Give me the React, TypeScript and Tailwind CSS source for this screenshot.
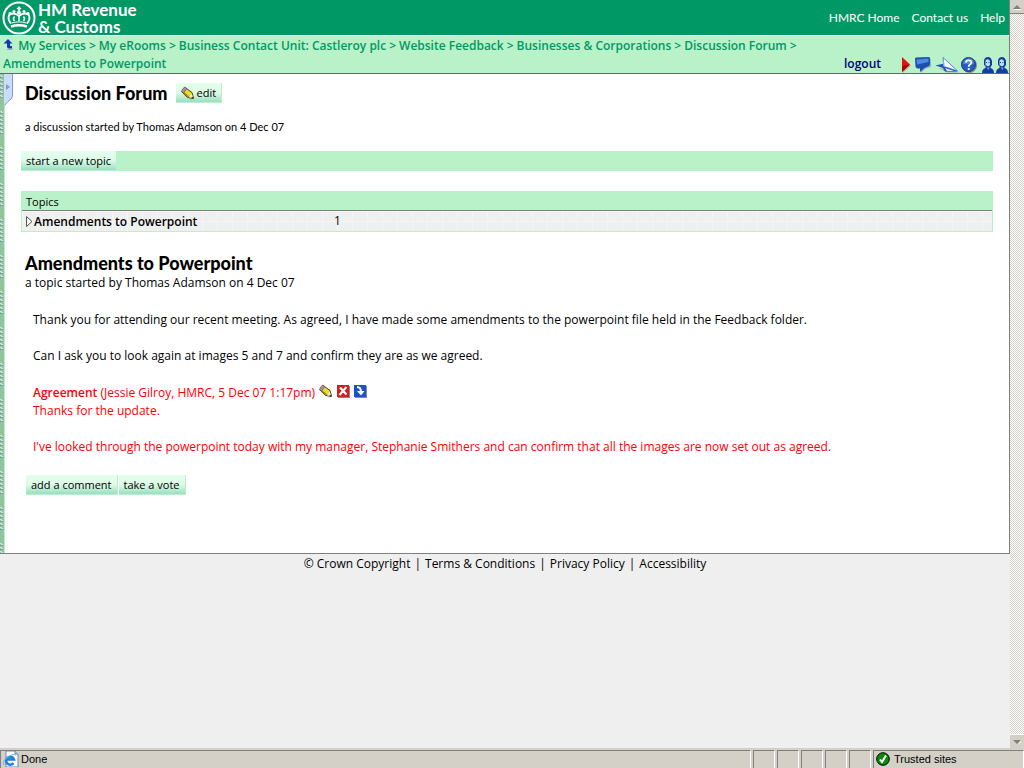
import type { ReactNode } from "react";

const trail = [
  "My Services",
  "My eRooms",
  "Business Contact Unit: Castleroy plc",
  "Website Feedback",
  "Businesses & Corporations",
  "Discussion Forum",
];

const topLinks = ["HMRC Home", "Contact us", "Help"];
const footerLinks = ["Terms & Conditions", "Privacy Policy", "Accessibility"];
const topics = [{ title: "Amendments to Powerpoint", count: 1 }];

function CrownLogo() {
  return (
    <svg className="h-[34px] w-[34px] shrink-0" viewBox="0 0 34 34" fill="none" stroke="#fff">
      <circle cx="17" cy="17" r="15.5" strokeWidth="2" />
      <path d="M17 5.500v5M14.800 7.500h4.400" strokeWidth="1.600" />
      <path d="M9 22.500C5 18 6 12.500 10.500 12.500c3 0 5 1 6.500 2.500 1.500-1.500 3.500-2.500 6.500-2.500 4.500 0 5.500 5.500 1.500 10" strokeWidth="1.800" />
      <path d="M17 14.500V20M12.500 15.500c-1.300 1.500-1.500 3 0 4.500M21.500 15.500c1.300 1.500 1.500 3 0 4.500" strokeWidth="1.500" />
      <path d="M9 25.500c5-1.500 11-1.500 16 0" strokeWidth="2.600" />
      <path d="M9.500 22c5-1.500 10-1.500 15 0" strokeWidth="1" />
      <g fill="#fff" stroke="none">
        <circle cx="17" cy="11.500" r="2" />
        <circle cx="12" cy="10.500" r="1.500" />
        <circle cx="22" cy="10.500" r="1.500" />
        <circle cx="8" cy="12.500" r="1.400" />
        <circle cx="26" cy="12.500" r="1.400" />
      </g>
    </svg>
  );
}

function UpIcon() {
  return (
    <svg className="inline-block h-3 w-3 align-[-1px]" viewBox="0 0 12 12">
      <path d="M4 10.500h5l1-1" stroke="#9aa8c8" fill="none" />
      <path d="M5 0 9.500 4.500H7V7h2v2.500H6Q4 9.500 4 7.500v-3H.5z" fill="#1238b8" />
    </svg>
  );
}

function PencilIcon() {
  return (
    <svg className="h-3.5 w-3.5" viewBox="0 0 14 14">
      <path d="M4 3 11 6.500 13.500 12.500 9.500 13.500 2 8z" fill="#777" opacity=".45" />
      <path d="M4 1.500 11 6.500 12.500 12 6.500 11.500 1 6z" fill="#e8dc30" stroke="#4a4510" />
      <path d="M2.500 6.500 7.500 11" stroke="#908a10" strokeWidth="1.500" />
      <path d="M1 4 3.500 1 6 2.500 2.500 7 .5 6z" fill="#b48a9c" stroke="#5b4650" strokeWidth=".6" />
      <path d="M10.500 7.500 12.500 12 8 11.500z" fill="#f3ecc8" />
      <path d="M11 10.500 13 12.500h-2.500z" fill="#111" />
    </svg>
  );
}

function DeleteIcon() {
  return (
    <svg className="h-[13px] w-[13px]" viewBox="0 0 13 13">
      <path d="M1 1h12v12H1z" fill="#888" />
      <path d="M0 0h12v12H0z" fill="#d41c1c" />
      <path d="m3 2.500 6.500 7M9.500 2 2.500 10" stroke="#fff" strokeWidth="2.200" />
    </svg>
  );
}

function MoveDownIcon() {
  return (
    <svg className="h-[13px] w-[13px]" viewBox="0 0 13 13">
      <path d="M1 1h12v12H1z" fill="#888" />
      <path d="M0 0h12v12H0z" fill="#1a54c4" />
      <path d="M3 2q4 0 4 5" stroke="#fff" strokeWidth="2" fill="none" />
      <path d="M3 6h7.500L7 10.500z" fill="#fff" />
    </svg>
  );
}

function FlagIcon() {
  return (
    <svg className="h-4 w-3" viewBox="0 0 12 16">
      <path d="M2 2v14l8-7.500z" fill="#888" opacity=".5" />
      <path d="M1 0v15l8-7.500z" fill="#e81010" />
      <path d="M1 9v6l8-7.500z" fill="#a80808" />
    </svg>
  );
}

function ChatIcon() {
  return (
    <svg className="h-4 w-4" viewBox="0 0 16 16">
      <path d="M3 3 16 2v8l-6 2-4 4V12z" fill="#8d9eb0" opacity=".7" />
      <path d="M1 .5 14 0q1 0 1 1.500V7q0 2-2 2.500L9.500 11 5 15v-3.500H3Q1 11.500.5 9.500L0 2Q0 .5 1 .5" fill="#1d4fb0" />
      <path d="M1.500 2.500 13.500 1.500V5L2 7.500z" fill="#4d8be0" />
    </svg>
  );
}

function PlaneIcon() {
  return (
    <svg className="h-4 w-6" viewBox="0 0 24 16">
      <path d="m4 11 8 4.500h12L12 12z" fill="#888" opacity=".6" />
      <path d="M.5 8.500 9 6.500l13.500 8H10L8 11z" fill="#1d55bd" />
      <path d="M8 .5 22.500 14 9 9.500z" fill="#fff" stroke="#2c66d0" strokeWidth=".8" />
      <path d="M8.500 3.500v6h2z" fill="#b4d0f6" />
      <path d="m10 11 9 3h-7z" fill="#e3eefc" />
    </svg>
  );
}

function HelpIcon() {
  return (
    <svg className="h-4 w-4" viewBox="0 0 16 16">
      <circle cx="8.500" cy="8.500" r="7.500" fill="#888" />
      <circle cx="7.500" cy="7.500" r="7" fill="#245cc0" stroke="#153b8c" />
      <path d="M2 7q0-5 5.500-5.500T13 7z" fill="#5286d8" />
      <path d="M5 5.500Q5 3.300 7.700 3.300T10.300 5.500Q10.300 7 8.500 8 7.700 8.500 7.700 9.700M7.700 11v2" stroke="#fff" strokeWidth="1.800" fill="none" />
    </svg>
  );
}

function PersonIcon() {
  return (
    <svg className="h-4 w-3.5" viewBox="0 0 14 16">
      <path d="M1 16q0-4 3.500-5V9L3 8V3Q4 0 7 0t4 4v4l-1.500 2v1q3.500 1 3.500 5z" fill="#123f9e" />
      <path d="M4.500 3.500Q7 1 9 4v4L7 9.500 4.500 8z" fill="#bfe0ff" />
      <path d="M5 5.500h1M7.500 5.500h1" stroke="#123f9e" />
      <path d="M5.500 10.500h3L7.500 13z" fill="#6aa6f0" />
    </svg>
  );
}

function Binding() {
  return (
    <div className="w-[5px] shrink-0 border-r border-[#b9f1c8] bg-[#90c49c]">
      <svg className="h-full w-full">
        <defs>
          <pattern id="binding" width="4" height="36" patternUnits="userSpaceOnUse">
            {[1, 5, 9, 13, 17, 21].map((y) => (
              <g key={y}>
                <path d={`M0 ${y}h2v1h1v1H1V${y + 1}H0z`} fill="#d3dfe0" />
                <path d={`M0 ${y + 2}h3v1H0z`} fill="#7f9aa0" />
              </g>
            ))}
          </pattern>
        </defs>
        <rect width="4" height="100%" fill="url(#binding)" />
      </svg>
    </div>
  );
}

function ActionButton({ children }: { children: ReactNode }) {
  return (
    <button className="flex h-5 items-center gap-0.5 border-r border-b border-[#b9f1c8] bg-linear-to-b from-[#e6ffee] via-[#dcfbe7] to-[#98dfc0] px-[5px] text-[11px] text-black">
      {children}
    </button>
  );
}

function Scrollbar() {
  return (
    <div className="flex w-3.5 shrink-0 flex-col justify-between bg-[conic-gradient(#fff_25%,#d4d0c8_0_50%,#fff_0_75%,#d4d0c8_0)] bg-[length:2px_2px]">
      <button aria-label="Scroll up" className="flex h-3.5 items-center justify-center border-b border-[#808080] bg-[#d4d0c8]">
        <svg className="h-1.5 w-2" viewBox="0 0 8 6">
          <path d="M1 6h7V5H1z" fill="#fff" />
          <path d="M0 5 4 1l4 4z" fill="#808080" />
        </svg>
      </button>
      <button aria-label="Scroll down" className="flex h-3.5 items-center justify-center border-t border-white bg-[#d4d0c8]">
        <svg className="h-1.5 w-2" viewBox="0 0 8 6">
          <path d="M5 6 8 3V1z" fill="#fff" />
          <path d="m0 1 4 4 4-4z" fill="#808080" />
        </svg>
      </button>
    </div>
  );
}

function StatusBar() {
  const cell = "border-t border-l border-r border-t-[#808080] border-l-[#808080] border-r-white";
  return (
    <div className="flex h-5 shrink-0 gap-0.5 bg-[#d4d0c8] pt-0.5 font-['Liberation_Sans',sans-serif] text-[11px] leading-4">
      <div className={`${cell} flex flex-1 gap-0.5 pl-0.5`}>
        <svg className="h-4 w-4" viewBox="0 0 16 16">
          <path d="M3 0h9l3 3v13H3z" fill="#fff" stroke="#6f86b8" />
          <path d="M12 0v3h3" fill="#c8d8f4" stroke="#6f86b8" />
          <path d="M10.500 12A4 4 0 1 1 11 8.500H4" fill="none" stroke="#2381d8" strokeWidth="2.500" />
          <path d="M1 14Q-1 10 5 6t8-2" fill="none" stroke="#68b8f0" />
        </svg>
        <span>Done</span>
      </div>
      {[0, 1, 2, 3, 4].map((n) => (
        <div key={n} className={`${cell} w-[22px]`} />
      ))}
      <div className={`${cell} flex w-[151px] gap-1 pl-0.5`}>
        <svg className="mt-px h-3.5 w-3.5" viewBox="0 0 14 14">
          <circle cx="7" cy="7" r="6.300" fill="#0a8a0a" stroke="#000" />
          <path d="m4 7.500 2 2.500 4-6.500" fill="none" stroke="#fff" strokeWidth="2" />
        </svg>
        <span>Trusted sites</span>
      </div>
    </div>
  );
}

export default function App() {
  return (
    <div className="flex h-screen flex-col bg-[#efefef] font-['Open_Sans',sans-serif] text-[12px] leading-[18px] text-black">
      <div className="flex min-h-0 flex-1">
        <div className="min-w-0 flex-1 overflow-hidden">
          <div className="border-r border-[#808080]">
            <header className="flex h-9 items-center justify-between border-b border-white bg-[#009966] pr-1 pl-0.5 font-[Lato,sans-serif] text-white">
              <div className="flex items-center gap-0.5">
                <CrownLogo />
                <div className="text-[17px] leading-[17px] font-bold">
                  <div>HM Revenue</div>
                  <div>&amp; Customs</div>
                </div>
              </div>
              <nav className="flex gap-3">
                {topLinks.map((label) => (
                  <a key={label} href="#">{label}</a>
                ))}
              </nav>
            </header>

            <div className="flex items-end justify-between border-b border-[#009966] bg-[#b9f1c8] pt-px pl-[3px] font-semibold">
              <nav className="text-[#009966]">
                <UpIcon />{" "}
                {trail.map((label) => (
                  <span key={label}>
                    <a href="#">{label}</a>
                    <span className="mx-[3px]">&gt;</span>
                  </span>
                ))}
                <br />
                <a href="#">Amendments to Powerpoint</a>
              </nav>
              <div className="flex shrink-0 items-end">
                <a href="#" className="mr-5 text-[#000080]">logout</a>
                <button aria-label="Flag"><FlagIcon /></button>
                <button aria-label="Chat" className="ml-0.5"><ChatIcon /></button>
                <button aria-label="Send" className="ml-1"><PlaneIcon /></button>
                <button aria-label="Help" className="ml-0.5"><HelpIcon /></button>
                <button aria-label="Members" className="ml-1 flex"><PersonIcon /><PersonIcon /></button>
              </div>
            </div>

            <div className="relative flex border-b border-[#808080] bg-white">
              <Binding />
              <button aria-label="Open sidebar" className="absolute top-0 left-1">
                <svg className="h-8 w-[9px]" viewBox="0 0 9 32">
                  <path d="M0 0h8.500v22Q8 25 4 27.500L.5 31.500z" fill="#ccdcff" />
                  <path d="M8.500 0v22Q8 25 4 27.500L.5 31.500" fill="none" stroke="#7c9ad8" />
                  <path d="M2 10v6l4-3z" fill="#7c9ad8" />
                </svg>
              </button>

              <main className="min-w-0 flex-1 px-4 pt-[9px] pb-[58px]">
                <div className="flex items-center gap-2 pl-1">
                  <h1 className="font-[Lato,sans-serif] text-[18px] leading-5 font-black">Discussion Forum</h1>
                  <ActionButton>
                    <PencilIcon />
                    edit
                  </ActionButton>
                </div>
                <p className="mt-[15px] pl-1 font-[Lato,sans-serif] text-[11px] leading-[18px]">
                  a discussion started by Thomas Adamson on 4 Dec 07
                </p>

                <div className="mt-[15px] flex bg-[#b9f1c8]">
                  <ActionButton>start a new topic</ActionButton>
                </div>

                <table className="mt-5 w-full border-separate border-spacing-0 border-x border-b border-[#b9f1c8] text-left">
                  <thead>
                    <tr className="bg-[#b9f1c8]">
                      <th colSpan={2} className="h-5 border-b border-[#808080] pt-0.5 pl-1 text-[11px] leading-4 font-normal">Topics</th>
                    </tr>
                  </thead>
                  <tbody>
                    {topics.map((topic) => (
                      <tr key={topic.title} className="bg-[#efefef] bg-[linear-gradient(to_right,#f5f5f5_1px,transparent_1px),linear-gradient(to_bottom,#f5f5f5_1px,transparent_1px)] bg-[length:15px_10px]">
                        <td className="h-5 w-[312px] pt-px pl-1">
                          <a href="#" className="flex items-center gap-px font-semibold">
                            <svg className="h-[11px] w-[7px]" viewBox="0 0 7 11">
                              <path d="M.5.5v10l5.500-5z" fill="#fff" stroke="#555" />
                            </svg>
                            {topic.title}
                          </a>
                        </td>
                        <td>{topic.count}</td>
                      </tr>
                    ))}
                  </tbody>
                </table>

                <article className="mt-[21px] pl-1">
                  <h2 className="font-[Lato,sans-serif] text-[18px] leading-5 font-black">Amendments to Powerpoint</h2>
                  <p className="mt-px">a topic started by Thomas Adamson on 4 Dec 07</p>
                  <div className="mt-[19px] space-y-[18px] pl-2">
                    <p>
                      Thank you for attending our recent meeting. As agreed, I have made some amendments to the powerpoint file held in the
                      Feedback folder.
                    </p>
                    <p>Can I ask you to look again at images 5 and 7 and confirm they are as we agreed.</p>
                    <section className="pt-px text-[#ff0000]">
                      <div className="flex items-center">
                        <p><b className="font-semibold">Agreement</b> (Jessie Gilroy, HMRC, 5 Dec 07 1:17pm)</p>
                        <div className="ml-1 flex items-center gap-1 pb-1">
                          <button aria-label="Edit comment"><PencilIcon /></button>
                          <button aria-label="Delete comment"><DeleteIcon /></button>
                          <button aria-label="Move comment down"><MoveDownIcon /></button>
                        </div>
                      </div>
                      <p>Thanks for the update.</p>
                      <p className="mt-[18px]">
                        I've looked through the powerpoint today with my manager, Stephanie Smithers and can confirm that all the images are
                        now set out as agreed.
                      </p>
                    </section>
                  </div>
                  <div className="mt-[19px] flex gap-px pl-px">
                    <ActionButton>add a comment</ActionButton>
                    <ActionButton>take a vote</ActionButton>
                  </div>
                </article>
              </main>
            </div>
          </div>

          <footer className="flex justify-center gap-1 pt-px">
            <span>© Crown Copyright</span>
            {footerLinks.map((label) => (
              <span key={label} className="flex gap-1">
                <span>|</span>
                <a href="#">{label}</a>
              </span>
            ))}
          </footer>
        </div>
        <Scrollbar />
      </div>
      <StatusBar />
    </div>
  );
}
